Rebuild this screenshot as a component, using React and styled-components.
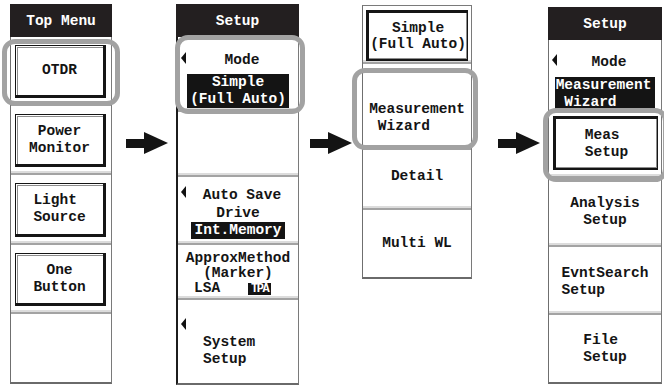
import React from "react"
import styled, { createGlobalStyle } from "styled-components"

const mono = `"Liberation Mono", "DejaVu Sans Mono", "Courier New", monospace`

const GlobalStyle = createGlobalStyle`
	html, body {
		margin: 0;
		padding: 0;
		background: #fff;
	}
	body {
		width: 664px;
		height: 387px;
		overflow: hidden;
		font-family: ${mono};
	}
`

const Arrow = () => (
	<svg width="42" height="22" viewBox="0 0 42 22">
		<rect x="0" y="7" width="24" height="9" fill="#141414" />
		<polygon points="18,0 42,11 18,22" fill="#141414" />
	</svg>
)

const App = () => {
	return (
		<>
			<GlobalStyle />
			<Stage>
				<Panel $w={102} $top={4}>
					<Header>Top Menu</Header>
					<Slot $h={69}>
						<Key>
							<Text>OTDR</Text>
						</Key>
						<Ring $t={2} $r={-9} $b={-2} $l={-9} />
					</Slot>
					<Slot $h={69}>
						<Key>
							<Text>{"Power\nMonitor"}</Text>
						</Key>
					</Slot>
					<Slot $h={70}>
						<Key>
							<Text $align="left">{"Light\nSource"}</Text>
						</Key>
					</Slot>
					<Slot $h={69}>
						<Key>
							<Text>{"One\nButton"}</Text>
						</Key>
					</Slot>
					<Slot $h={68} />
				</Panel>

				<Connector $w={64} $pl={14}>
					<Arrow />
				</Connector>

				<Panel $w={123} $top={4} $strong>
					<Header $edge={2}>Setup</Header>
					<Slot $h={75} $justify="flex-start" $pad="15px 0 0">
						<CaretRow>
							<Caret />
							<Text $grow>Mode</Text>
						</CaretRow>
						<Value $mt={5}>{"Simple\n(Full Auto)"}</Value>
						<Ring $t={-2} $r={-7} $b={-4} $l={-3} />
					</Slot>
					<Slot $h={65} />
					<Slot $h={68} $justify="flex-start" $pad="9px 0 0">
						<CaretRow>
							<Caret />
							<Text $grow $lh={18}>Auto Save</Text>
						</CaretRow>
						<Text $lh={18}>Drive</Text>
						<Value>Int.Memory</Value>
					</Slot>
					<Slot $h={55} $justify="flex-start" $pad="6px 0 0">
						<Text $lh={15}>{"ApproxMethod\n(Marker)"}</Text>
						<Choices>
							<Text $lh={15}>LSA</Text>
							<Value $tight>TPA</Value>
						</Choices>
					</Slot>
					<Slot $h={83} $justify="flex-start" $pad="18px 0 0">
						<Caret />
						<Text $align="left" $ml={25} $mt={4}>{"System\nSetup"}</Text>
					</Slot>
				</Panel>

				<Connector $w={63} $pl={11}>
					<Arrow />
				</Connector>

				<Panel $w={110} $top={5} $boxed>
					<Slot $h={58}>
						<Key $pressed $m="4px 3px 1px 3px">
							<Text $lh={16}>{"Simple\n(Full Auto)"}</Text>
						</Key>
					</Slot>
					<Slot $h={86} $pad="24px 0 0">
						<Text $align="left">{"Measurement\n Wizard"}</Text>
						<Ring $t={4} $r={-7} $b={-2} $l={-11} />
					</Slot>
					<Slot $h={60} $pad="0 0 6px">
						<Text>Detail</Text>
					</Slot>
					<Slot $h={67}>
						<Text>Multi WL</Text>
					</Slot>
				</Panel>

				<Connector $w={76} $pl={26}>
					<Arrow />
				</Connector>

				<Panel $w={114} $top={7}>
					<Header>Setup</Header>
					<Slot $h={73} $justify="flex-start" $pad="14px 0 0">
						<CaretRow>
							<Caret />
							<Text $grow>Mode</Text>
						</CaretRow>
						<Value $mt={6} $align="left" $pad="0 4px 0 1px">{"Measurement\n Wizard"}</Value>
					</Slot>
					<Slot $h={65}>
						<Key $pressed $m="3px 3px 6px 4px">
							<Text $align="left">{"Meas\nSetup"}</Text>
						</Key>
						<Ring $t={-5} $r={-7} $b={-6} $l={-6} />
					</Slot>
					<Slot $h={69}>
						<Text>{"Analysis\nSetup"}</Text>
					</Slot>
					<Slot $h={68} $pad="3px 0 0">
						<Text $align="left">{"EvntSearch\nSetup"}</Text>
					</Slot>
					<Slot $h={67}>
						<Text $align="left">{"File\nSetup"}</Text>
					</Slot>
				</Panel>
			</Stage>
		</>
	)
}

const Stage = styled.div`
	display: flex;
	align-items: flex-start;
	width: 664px;
	height: 387px;
	padding-left: 10px;
	box-sizing: border-box;
`

const Panel = styled.div`
	display: flex;
	flex-direction: column;
	flex-shrink: 0;
	width: ${p => p.$w}px;
	margin-top: ${p => p.$top}px;
	box-sizing: border-box;
	background: #fff;
	border-left: ${p => p.$strong ? "2px solid #1c1c1c" : "1px solid #6f6f6f"};
	border-right: 1px solid #7a7a7a;
	border-top: ${p => p.$boxed ? "1px solid #7a7a7a" : "none"};
	border-bottom: 2px solid #6a6a6a;
`

const Header = styled.div`
	height: 33px;
	margin: 0 -1px 0 -${p => p.$edge || 1}px;
	display: flex;
	align-items: center;
	justify-content: center;
	background: #231f20;
	color: #fff;
	font-family: ${mono};
	font-size: 14.5px;
	font-weight: bold;
`

const Slot = styled.div`
	position: relative;
	height: ${p => p.$h}px;
	box-sizing: border-box;
	display: flex;
	flex-direction: column;
	justify-content: ${p => p.$justify || "center"};
	padding: ${p => p.$pad || "0"};
	border-bottom: 2px solid #a3a3a3;
	box-shadow: inset 0 -3px 0 -1px #dcdcdc;
	&:last-child {
		border-bottom: none;
		box-shadow: none;
	}
`

const Key = styled.div`
	flex: 1;
	display: flex;
	align-items: center;
	justify-content: center;
	margin: ${p => p.$m || "8px 5px 6px 4px"};
	border-style: solid;
	border-color: #151515;
	border-width: ${p => p.$pressed ? "3px 1px 2px 3px" : "1px 3px 3px 1px"};
	box-shadow: ${p => p.$pressed
		? "inset -1px -1px 0 #8d8d8d"
		: "inset 1px 1px 0 #fff, inset 2px 2px 0 #8d8d8d"};
`

const Text = styled.div`
	font-family: ${mono};
	font-size: 14.5px;
	font-weight: bold;
	line-height: ${p => p.$lh || 17}px;
	color: #141414;
	white-space: pre;
	text-align: ${p => p.$align || "center"};
	align-self: ${p => p.$ml ? "flex-start" : "center"};
	margin-left: ${p => p.$ml || 0}px;
	margin-top: ${p => p.$mt || 0}px;
	${p => p.$grow && "flex: 1;"}
`

const Value = styled.div`
	align-self: center;
	margin-top: ${p => p.$mt || 0}px;
	padding: ${p => p.$pad || "0 3px"};
	background: #141414;
	color: #fff;
	font-family: ${mono};
	font-size: ${p => p.$tight ? "12px" : "14.5px"};
	font-weight: bold;
	letter-spacing: ${p => p.$tight ? "-1.5px" : "0"};
	line-height: ${p => p.$tight ? "12px" : "17px"};
	white-space: pre;
	text-align: ${p => p.$align || "center"};
`

const CaretRow = styled.div`
	display: flex;
	align-items: flex-start;
`

const Caret = styled.span`
	display: block;
	flex-shrink: 0;
	width: 0;
	height: 0;
	margin-left: 3px;
	border-top: 6px solid transparent;
	border-bottom: 6px solid transparent;
	border-right: 5px solid #111;
`

const Choices = styled.div`
	display: flex;
	align-items: center;
	gap: 28px;
	padding-left: 16px;
`

const Ring = styled.div`
	position: absolute;
	top: ${p => p.$t}px;
	right: ${p => p.$r}px;
	bottom: ${p => p.$b}px;
	left: ${p => p.$l}px;
	border: 5px solid #a2a2a2;
	border-radius: 13px;
	pointer-events: none;
	z-index: 2;
`

const Connector = styled.div`
	flex-shrink: 0;
	width: ${p => p.$w}px;
	padding-left: ${p => p.$pl}px;
	margin-top: 132px;
	box-sizing: border-box;
	display: flex;
`

export default App
